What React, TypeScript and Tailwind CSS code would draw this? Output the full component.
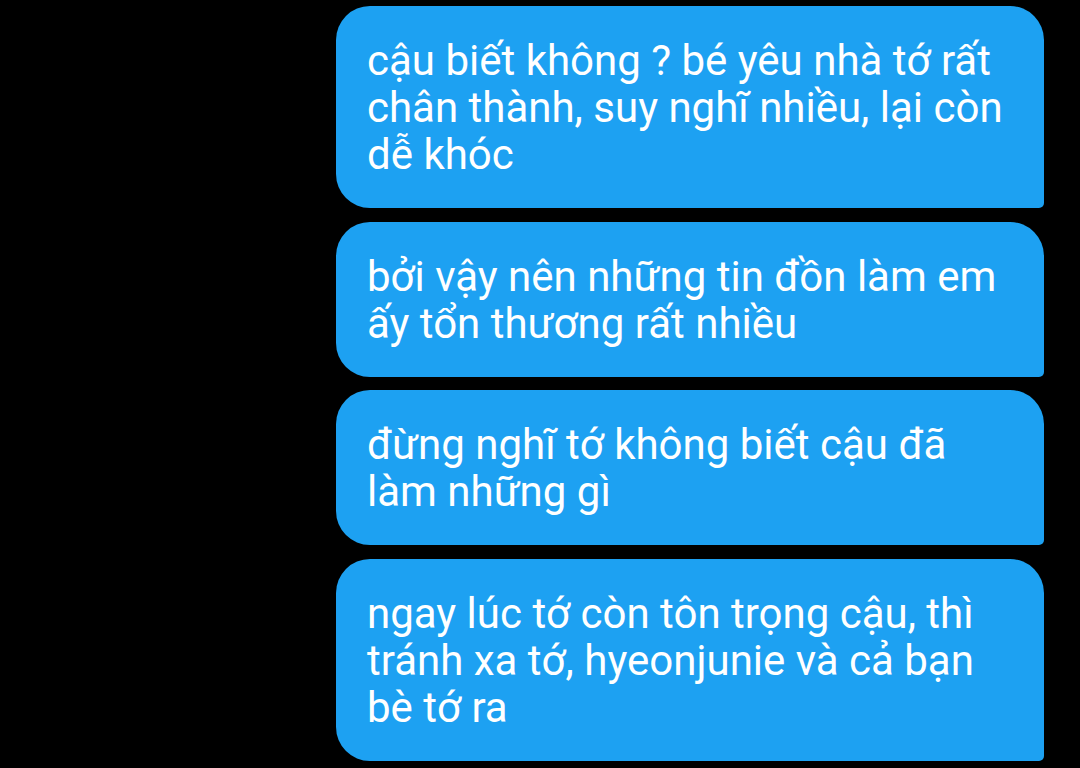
const messages: string[][] = [
  ['cậu biết không ? bé yêu nhà tớ rất', 'chân thành, suy nghĩ nhiều, lại còn', 'dễ khóc'],
  ['bởi vậy nên những tin đồn làm em', 'ấy tổn thương rất nhiều'],
  ['đừng nghĩ tớ không biết cậu đã', 'làm những gì'],
  ['ngay lúc tớ còn tôn trọng cậu, thì', 'tránh xa tớ, hyeonjunie và cả bạn', 'bè tớ ra'],
];

function Bubble({ lines }: { lines: string[] }) {
  return (
    <div className="w-[708px] rounded-[34px] rounded-br-[5px] bg-[#1da1f2] pl-[31px] pt-[31px] pb-[30px] text-[42px] leading-[47px] text-white">
      {lines.map((line, i) => (
        <div key={i} className="whitespace-nowrap">
          {line}
        </div>
      ))}
    </div>
  );
}

export default function App() {
  return (
    <div
      className="flex h-[768px] w-[1080px] flex-col items-end gap-[13.5px] overflow-hidden bg-black pr-[36px] pt-[6px]"
      style={{ fontFamily: 'Roboto, "Noto Sans", sans-serif' }}
    >
      {messages.map((lines, i) => (
        <Bubble key={i} lines={lines} />
      ))}
    </div>
  );
}
